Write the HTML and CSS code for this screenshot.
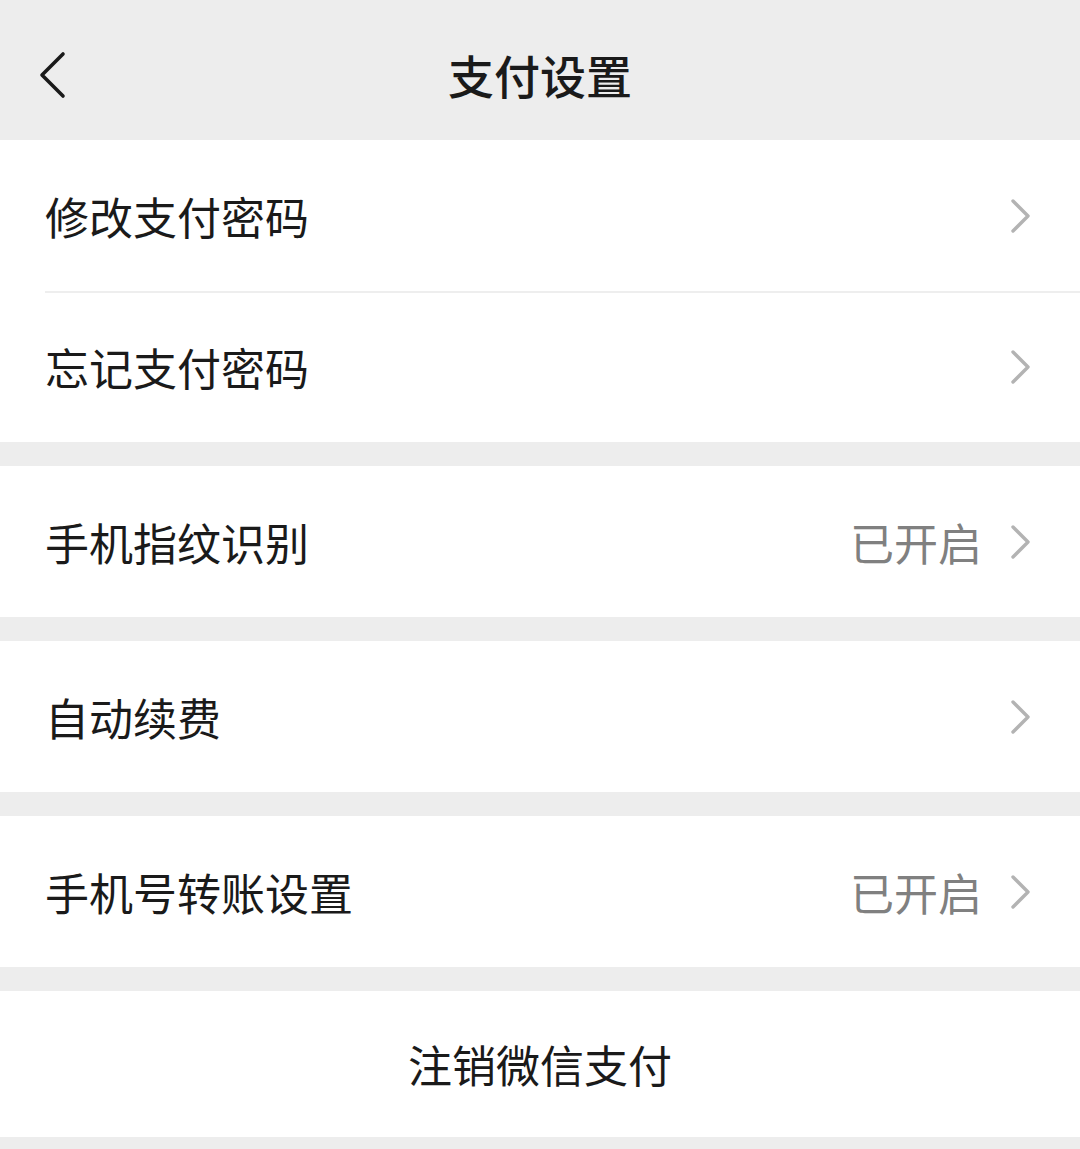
FILE: index.html
```html
<!DOCTYPE html>
<html lang="zh-CN">
<head>
    <meta charset="UTF-8">
    <meta name="viewport" content="width=device-width, initial-scale=1.0">
    <title>支付设置</title>
    <link rel="stylesheet" href="styles.css">
</head>
<body>
    <div class="header">
        <span class="back">
            <svg width="30" height="48" viewBox="0 0 30 48">
                <polyline points="25,3 4,24 25,45" fill="none" stroke="#1a1a1a" stroke-width="3.6" stroke-linecap="round" stroke-linejoin="round"/>
            </svg>
        </span>
        <h1>支付设置</h1>
    </div>

    <div class="group">
        <div class="row">
            <span class="label">修改支付密码</span>
            <span class="arrow"></span>
        </div>
        <div class="row">
            <span class="label">忘记支付密码</span>
            <span class="arrow"></span>
        </div>
    </div>

    <div class="group">
        <div class="row">
            <span class="label">手机指纹识别</span>
            <span class="value">已开启</span>
            <span class="arrow"></span>
        </div>
    </div>

    <div class="group">
        <div class="row">
            <span class="label">自动续费</span>
            <span class="arrow"></span>
        </div>
    </div>

    <div class="group">
        <div class="row">
            <span class="label">手机号转账设置</span>
            <span class="value">已开启</span>
            <span class="arrow"></span>
        </div>
    </div>

    <div class="group">
        <div class="row center">
            <span class="label">注销微信支付</span>
        </div>
    </div>
</body>
</html>
```

FILE: styles.css
```css
body {
    margin: 0;
    background: #ededed;
    font-family: "Noto Sans CJK SC", "Noto Sans", sans-serif;
    color: #1a1a1a;
}
.header {
    position: relative;
    height: 140px;
    display: flex;
    align-items: center;
    justify-content: center;
    padding-top: 8px;
    box-sizing: border-box;
}
.header h1 {
    margin: 0;
    font-size: 46px;
    font-weight: 500;
    line-height: 1;
}
.back {
    position: absolute;
    left: 38px;
    top: 51px;
    display: block;
}
.back svg {
    display: block;
}
.group {
    background: #fff;
    margin-bottom: 24px;
}
.row {
    height: 151px;
    display: flex;
    align-items: center;
    padding: 0 48px 0 45px;
    position: relative;
}
.row + .row::before {
    content: "";
    position: absolute;
    left: 45px;
    right: 0;
    top: 0;
    height: 2px;
    background: #eeeeee;
}
.label {
    flex: 1;
    font-size: 44px;
    line-height: 1;
}
.value {
    font-size: 44px;
    line-height: 1;
    color: #808080;
    margin-right: 28px;
}
.arrow {
    width: 22px;
    height: 34px;
    background: url("data:image/svg+xml;utf8,<svg xmlns='http://www.w3.org/2000/svg' width='22' height='34' viewBox='0 0 22 34'><polyline points='3,2 18,17 3,32' fill='none' stroke='%23b3b3b3' stroke-width='3.4' stroke-linecap='round' stroke-linejoin='round'/></svg>") no-repeat center;
}
.center {
    height: 146px;
    justify-content: center;
    padding: 0;
}
.center .label {
    flex: none;
}
```
